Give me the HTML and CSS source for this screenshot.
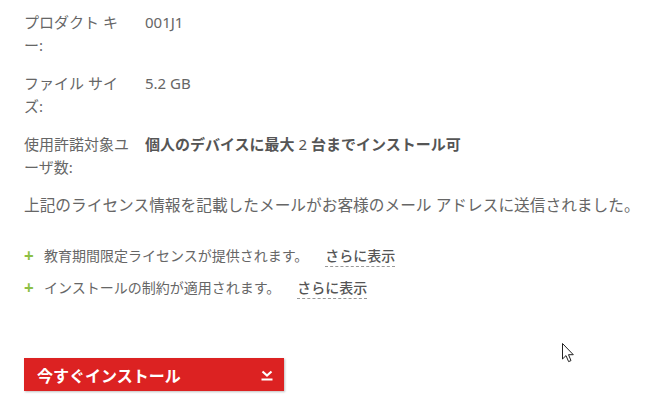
FILE: index.html
```html
<!DOCTYPE html>
<html lang="ja">
<head>
<meta charset="utf-8">
<link rel="stylesheet" href="styles.css">
</head>
<body>
<main class="page">
  <dl class="info">
    <div class="info-row">
      <dt class="info-label">プロダクト キー:</dt>
      <dd class="info-value">001J1</dd>
    </div>
    <div class="info-row">
      <dt class="info-label">ファイル サイズ:</dt>
      <dd class="info-value">5.2 GB</dd>
    </div>
    <div class="info-row">
      <dt class="info-label">使用許諾対象ユーザ数:</dt>
      <dd class="info-value strong">個人のデバイスに最大 <span class="num">2</span> 台までインストール可</dd>
    </div>
  </dl>
  <p class="notice">上記のライセンス情報を記載したメールがお客様のメール アドレスに送信されました。</p>
  <ul class="features">
    <li class="feature"><span class="plus">+</span><span class="feature-text">教育期間限定ライセンスが提供されます。</span><a class="more">さらに表示</a></li>
    <li class="feature"><span class="plus">+</span><span class="feature-text">インストールの制約が適用されます。</span><a class="more">さらに表示</a></li>
  </ul>
  <button class="install">
    <span class="install-text">今すぐインストール</span>
    <svg class="install-icon" width="12" height="12" viewBox="0 0 12 12"><path d="M1.5 2.5 L6 6.5 L10.5 2.5" fill="none" stroke="#fff" stroke-width="2.2"/><rect x="0.5" y="9.5" width="11" height="2" fill="#fff"/></svg>
  </button>
</main>
<svg class="cursor" width="13" height="20" viewBox="0 0 13 20"><path d="M0.5 0.5 L0.5 16 L4 12.6 L6.6 18.6 L9 17.6 L6.5 11.7 L11.3 11.7 Z" fill="#fff" stroke="#222" stroke-width="1"/></svg>
</body>
</html>
```

FILE: styles.css
```css
html, body {
  margin: 0;
  padding: 0;
  background: #fff;
}
body {
  font-family: "Noto Sans", "Noto Sans CJK JP", sans-serif;
  color: #666;
  position: relative;
  width: 646px;
  height: 405px;
  overflow: hidden;
}
.page {
  padding: 11px 0 0 24px;
}
.info {
  margin: 0;
}
.info-row {
  display: grid;
  grid-template-columns: 108px 1fr;
  column-gap: 13px;
  margin-bottom: 15px;
  font-size: 15px;
  line-height: 23px;
}
.info-label {
  margin: 0;
}
.info-value {
  margin: 0;
  white-space: nowrap;
}
.strong {
  font-weight: 700;
  color: #555;
}
.num {
  font-weight: 400;
}
.notice {
  margin: 0;
  font-size: 15.7px;
  line-height: 23px;
  white-space: nowrap;
}
.features {
  list-style: none;
  margin: 28px 0 0;
  padding: 0;
}
.feature {
  display: flex;
  align-items: center;
  font-size: 14px;
  line-height: 22px;
  height: 22px;
  margin-bottom: 10px;
}
.plus {
  color: #8dc044;
  font-weight: 700;
  font-size: 17px;
  width: 20px;
}
.feature-text {
  margin-right: 17px;
}
.more {
  color: #555;
  font-weight: 500;
  border-bottom: 1px dashed #999;
  line-height: 20px;
}
.install {
  margin-top: 59px;
  display: flex;
  align-items: center;
  justify-content: space-between;
  width: 260px;
  height: 33px;
  padding: 0 11px 0 13px;
  border: none;
  background: #dc2222;
  box-shadow: 1px 1px 2px rgba(0,0,0,0.25);
  color: #fff;
  font-family: "Noto Sans", "Noto Sans CJK JP", sans-serif;
  font-size: 16px;
  font-weight: 700;
  cursor: pointer;
}
.install-icon {
  display: block;
}
.cursor {
  position: absolute;
  left: 562px;
  top: 343px;
}
```
